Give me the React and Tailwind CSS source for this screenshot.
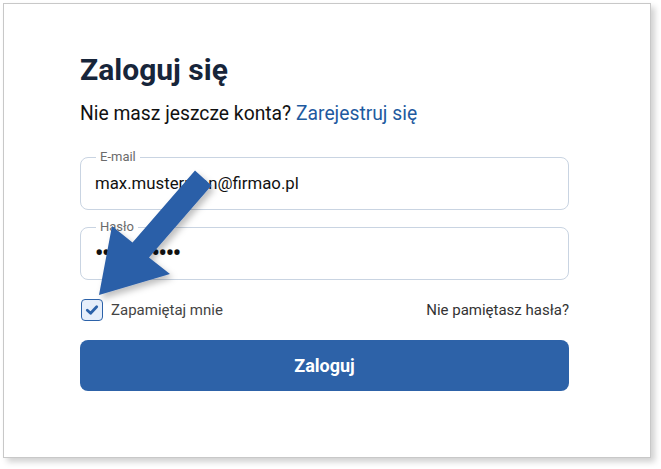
import React from "react";

function Field({ label, children }) {
  return (
    <div className="relative h-[53px] rounded-lg border border-[#c9d4e2] flex items-center px-[14px]">
      <span className="absolute left-[15px] -top-[9px] bg-white px-[4px] text-[13px] leading-[16px] text-[#6b6b6b]">
        {label}
      </span>
      {children}
    </div>
  );
}

function Arrow() {
  return (
    <svg
      className="absolute left-0 top-0 pointer-events-none"
      width="661"
      height="469"
      viewBox="0 0 661 469"
    >
      <defs>
        <filter id="sh" x="-20%" y="-20%" width="140%" height="140%">
          <feDropShadow dx="3" dy="4" stdDeviation="3" floodColor="#000" floodOpacity="0.25" />
        </filter>
      </defs>
      <polygon
        points="195,170.5 211.5,185.5 149,257.5 170,274 99,295 112,226 132.5,242.5"
        fill="#2c5fa8"
        filter="url(#sh)"
      />
    </svg>
  );
}

export default function App() {
  return (
    <div className="relative w-[661px] h-[469px] bg-white overflow-hidden font-['Roboto',sans-serif]">
      <div className="absolute left-[3px] top-[3px] w-[648px] h-[455px] bg-white border border-[#c8c8c8] shadow-[4px_4px_6px_rgba(0,0,0,0.18)]">
        <div className="pl-[76px] pr-[81px] pt-[48px]">
          <h1 className="text-[30px] leading-[36px] font-bold text-[#17253a]">Zaloguj się</h1>
          <p className="mt-[14px] text-[19.3px] leading-[24px] text-[#111]">
            Nie masz jeszcze konta? <span className="text-[#1e5aa0]">Zarejestruj się</span>
          </p>
          <div className="mt-[31px] flex flex-col gap-[17px]">
            <Field label="E-mail">
              <span className="text-[16.8px] text-[#111]">max.musterman@firmao.pl</span>
            </Field>
            <Field label="Hasło">
              <span className="text-[23px] leading-[20px] font-bold tracking-[-1.2px] text-[#111]">••••••••••••</span>
            </Field>
          </div>
          <div className="mt-[19px] flex items-center justify-between">
            <label className="flex items-center gap-[8px]">
              <span className="w-[22px] h-[22px] ml-[1px] rounded-[4px] border-[1.5px] border-[#2c62a9] bg-[#e6eefa] flex items-center justify-center">
                <svg width="14" height="14" viewBox="0 0 14 14">
                  <path d="M2.3 7.2 L5.6 10.2 L11.7 3.8" fill="none" stroke="#2c62a9" strokeWidth="2.8" strokeLinecap="round" strokeLinejoin="round" />
                </svg>
              </span>
              <span className="text-[15px] text-[#444]">Zapamiętaj mnie</span>
            </label>
            <span className="text-[15px] text-[#333]">Nie pamiętasz hasła?</span>
          </div>
          <button className="mt-[18px] w-full h-[51px] rounded-lg bg-[#2d62a8] text-white text-[18px] font-bold">
            Zaloguj
          </button>
        </div>
      </div>
      <Arrow />
    </div>
  );
}
